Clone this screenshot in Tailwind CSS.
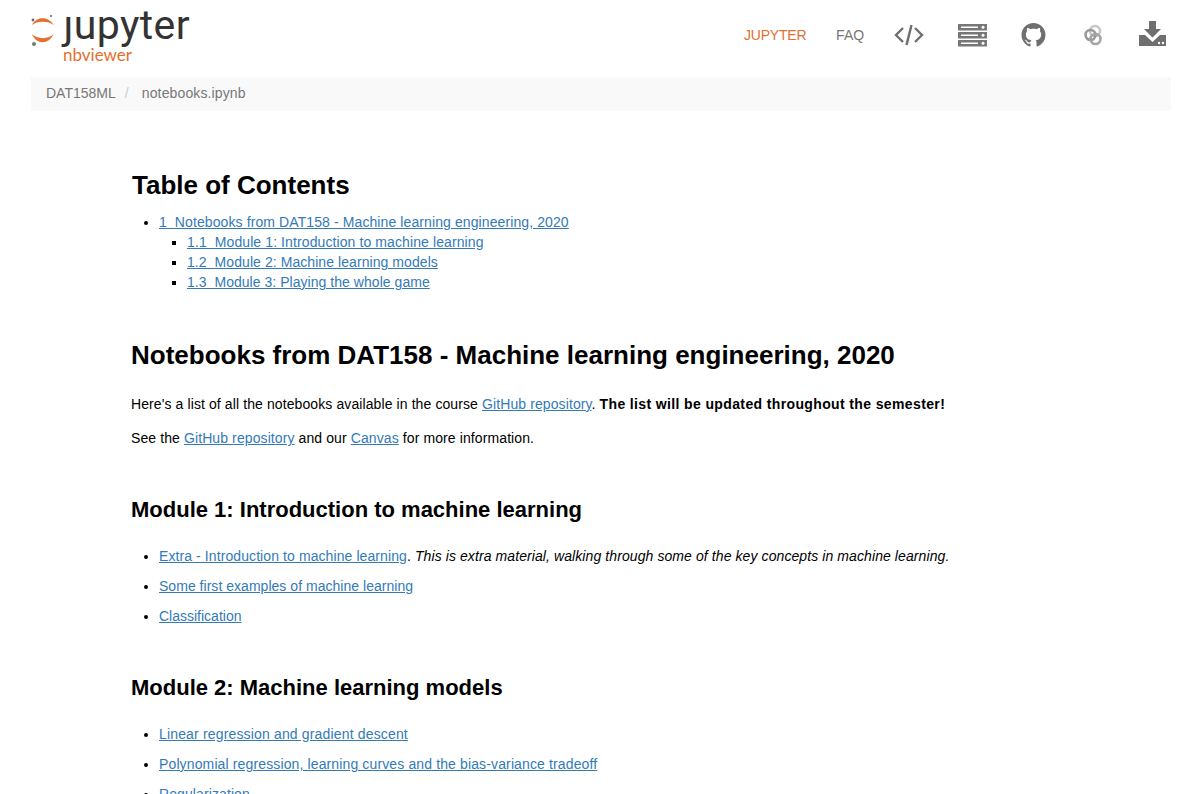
<!DOCTYPE html>
<html lang="en">
<head>
<meta charset="utf-8">
<title>notebooks.ipynb</title>
<script src="https://cdn.jsdelivr.net/npm/@tailwindcss/browser@4"></script>
</head>
<body class="bg-white text-black font-['Liberation_Sans',Arial,sans-serif] text-[14px] leading-[20px] tracking-[0.1px] h-[794px] overflow-hidden">
<header class="h-[77px] pl-[30px] pr-[15px] flex items-start justify-between">
  <div class="flex flex-col pt-[10px] w-[170px]">
    <div class="flex items-start h-[36px]">
      <svg width="33" height="36" viewBox="0 0 33 36" class="shrink-0">
        <circle cx="3" cy="10" r="1.4" fill="#6b6b6b"/>
        <circle cx="21" cy="6" r="1.1" fill="#6b6b6b"/>
        <circle cx="4" cy="34" r="2" fill="#777"/>
        <path d="M2 15C6 6 19 6 23.5 15C19 10.5 6.5 10.5 2 15Z" fill="#e46f2e"/>
        <path d="M2 24C6 35 19 35 23.5 24C19 29.5 6.5 29.5 2 24Z" fill="#e46f2e"/>
      </svg>
      <span class="font-['Roboto','Noto_Sans',sans-serif] font-normal text-[41px] leading-[36px] text-[#333] tracking-[0.4px] -mt-[3px]">ȷupyter</span>
    </div>
    <span class="font-['Lato','Noto_Sans',sans-serif] text-[17px] leading-[18px] tracking-normal text-[#e46f2e] ml-[33px]">nbviewer</span>
  </div>
  <nav class="flex items-center h-[70px] text-[#777]">
    <a class="text-[#e46f2e] w-[92px] tracking-[-0.2px]">JUPYTER</a>
    <a class="w-[58px]">FAQ</a>
    <svg width="30" height="22" viewBox="0 0 30 22" class="mr-[34px]" fill="none" stroke="#6f6f6f" stroke-width="2.4"><path d="M9 4L2 11L9 18M21 4L28 11L21 18"/><path d="M17.5 1L12.5 21"/></svg>
    <svg width="30" height="24" viewBox="0 0 30 24" class="mr-[33px]"><g fill="#777"><rect width="29" height="6.5" y="1"/><rect width="29" height="6.5" y="9"/><rect width="29" height="6.5" y="17"/></g><g fill="#fff"><rect x="3" y="3.5" width="17" height="1.5"/><rect x="3" y="11.5" width="17" height="1.5"/><rect x="3" y="19.5" width="17" height="1.5"/><circle cx="25" cy="4.2" r="1.5"/><circle cx="25" cy="12.2" r="1.5"/><circle cx="25" cy="20.2" r="1.5"/></g></svg>
    <svg width="25" height="24" viewBox="0 0 16 16" class="mr-[37px]" fill="#6f6f6f"><path d="M8 0C3.58 0 0 3.58 0 8c0 3.54 2.29 6.53 5.47 7.59.4.07.55-.17.55-.38 0-.19-.01-.82-.01-1.49-2.01.37-2.53-.49-2.69-.94-.09-.23-.48-.94-.82-1.13-.28-.15-.68-.52-.01-.53.63-.01 1.08.58 1.23.82.72 1.21 1.87.87 2.33.66.07-.52.28-.87.51-1.07-1.78-.2-3.64-.89-3.64-3.95 0-.87.31-1.59.82-2.15-.08-.2-.36-1.02.08-2.12 0 0 .67-.21 2.2.82.64-.18 1.32-.27 2-.27s1.36.09 2 .27c1.53-1.04 2.2-.82 2.2-.82.44 1.1.16 1.92.08 2.12.51.56.82 1.27.82 2.15 0 3.07-1.87 3.75-3.65 3.95.29.25.54.73.54 1.48 0 1.07-.01 1.93-.01 2.2 0 .21.15.46.55.38A8.01 8.01 0 0 0 16 8c0-4.42-3.58-8-8-8z"/></svg>
    <svg width="20" height="24" viewBox="0 0 20 24" class="mr-[36px]" fill="none" stroke-width="2.6"><circle cx="12" cy="8" r="5" stroke="#c8c8c8"/><circle cx="7.5" cy="12" r="5" stroke="#999"/><circle cx="12.5" cy="16" r="5" stroke="#a5a5a5"/></svg>
    <svg width="27" height="25" viewBox="0 0 27 25" fill="#6f6f6f" class="-mt-[3px]"><path d="M10 0H17V8H22L13.5 16.5L5 8H10Z"/><path d="M0 14H6L13.5 21L21 14H27V25H0Z"/><circle cx="20" cy="22" r="1.2" fill="#fff"/><circle cx="24" cy="22" r="1.2" fill="#fff"/></svg>
  </nav>
</header>
<div class="mx-[31px] mr-[10px] h-[34px] bg-[#f9f9f9] flex items-center px-[15px] pb-[2px] text-[#777]">
  <span class="tracking-normal">DAT158ML</span><span class="text-[#ccc] ml-[9px] mr-[13px]">/</span><span class="tracking-[0.13px]">notebooks.ipynb</span>
</div>
<main class="ml-[131px] w-[900px]">
  <h1 class="ml-[1px] mt-[59px] text-[26px] leading-[30px] font-bold tracking-normal">Table of Contents</h1>
  <ul class="mt-[12px] ml-[28px] list-disc text-[#337ab7]">
    <li class="marker:text-black"><a class="underline" href="#">1&nbsp;&nbsp;Notebooks from DAT158 - Machine learning engineering, 2020</a>
      <ul class="ml-[28px] list-[square]">
        <li class="marker:text-black"><a class="underline" href="#">1.1&nbsp;&nbsp;Module 1: Introduction to machine learning</a></li>
        <li class="marker:text-black tracking-[0.07px]"><a class="underline" href="#">1.2&nbsp;&nbsp;Module 2: Machine learning models</a></li>
        <li class="marker:text-black tracking-[0.04px]"><a class="underline" href="#">1.3&nbsp;&nbsp;Module 3: Playing the whole game</a></li>
      </ul>
    </li>
  </ul>
  <h2 class="mt-[48px] text-[26px] leading-[30px] font-bold tracking-normal">Notebooks from DAT158 - Machine learning engineering, 2020</h2>
  <p class="mt-[24px]">Here's a list of all the notebooks available in the course <a class="underline text-[#337ab7]" href="#">GitHub repository</a>. <b class="tracking-[0.37px]">The list will be updated throughout the semester!</b></p>
  <p class="mt-[14px]">See the <a class="underline text-[#337ab7]" href="#">GitHub repository</a> and our <a class="underline text-[#337ab7]" href="#">Canvas</a> for more information.</p>
  <h3 class="mt-[49px] text-[22px] leading-[26px] font-bold tracking-normal">Module 1: Introduction to machine learning</h3>
  <ul class="mt-[23px] ml-[28px] list-disc flex flex-col gap-[10px]">
    <li class="tracking-[0.09px]"><a class="underline text-[#337ab7]" href="#">Extra - Introduction to machine learning</a>. <i>This is extra material, walking through some of the key concepts in machine learning.</i></li>
    <li class="tracking-[0.03px]"><a class="underline text-[#337ab7]" href="#">Some first examples of machine learning</a></li>
    <li class="tracking-normal"><a class="underline text-[#337ab7]" href="#">Classification</a></li>
  </ul>
  <h3 class="mt-[49px] text-[22px] leading-[26px] font-bold tracking-normal">Module 2: Machine learning models</h3>
  <ul class="mt-[23px] ml-[28px] list-disc flex flex-col gap-[10px]">
    <li class="tracking-[0.16px]"><a class="underline text-[#337ab7]" href="#">Linear regression and gradient descent</a></li>
    <li class="tracking-[0.13px]"><a class="underline text-[#337ab7]" href="#">Polynomial regression, learning curves and the bias-variance tradeoff</a></li>
    <li><a class="underline text-[#337ab7]" href="#">Regularization</a></li>
  </ul>
</main>
</body>
</html>
